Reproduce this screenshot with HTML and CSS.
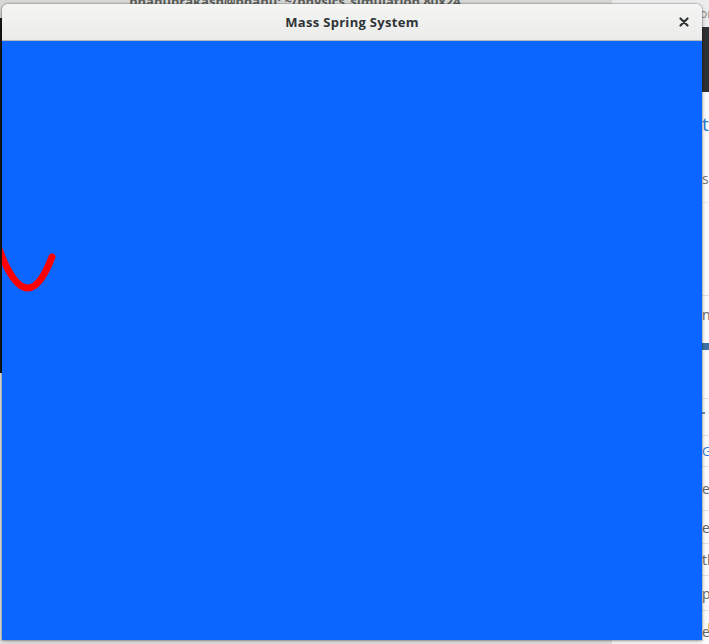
FILE: index.html
```html
<!DOCTYPE html>
<html>
<head>
<meta charset="utf-8">
<title>Mass Spring System</title>
<link rel="stylesheet" href="styles.css">
</head>
<body>
<div class="desktop">
  <div class="browser">
    <div class="tabbar"><span class="tabtext">or</span></div>
    <div class="toolbar"></div>
    <div class="page">
      <div class="row head"><span class="big">ti</span><span class="sub">s</span></div>
      <div class="row gap1"></div>
      <div class="row sec"><span class="txt">ne</span><div class="bar"></div></div>
      <div class="row r-mark"><span class="mark"></span></div>
      <div class="row r1"><span class="link">G</span></div>
      <div class="row r2"><span class="txt">e</span></div>
      <div class="row r3"><span class="txt">e</span></div>
      <div class="row r4"><span class="txt">th</span></div>
      <div class="row r5"><span class="txt">p</span></div>
      <div class="row r6"><span class="txt">e</span><span class="yel"></span></div>
    </div>
  </div>

  <div class="terminal">
    <div class="term-title">bhanuprakash@bhanu: ~/physics_simulation 80x24</div>
    <div class="term-body"></div>
  </div>

  <div class="window">
    <div class="headerbar">
      <span class="title">Mass Spring System</span>
      <span class="close">
        <svg width="10" height="10" viewBox="0 0 10 10"><path d="M1.5 1.5 L8.5 8.5 M8.5 1.5 L1.5 8.5" stroke="#2e3436" stroke-width="2.2" stroke-linecap="round"/></svg>
      </span>
    </div>
    <div class="canvas">
      <svg class="spring" width="700" height="599" viewBox="0 0 700 599">
        <path d="M-6 199.5 Q10 247 26 247 Q38 247 50 216" fill="none" stroke="#ff0000" stroke-width="7" stroke-linecap="round" stroke-linejoin="round"/>
      </svg>
    </div>
  </div>
</div>
</body>
</html>
```

FILE: styles.css
```css
html, body {
  margin: 0;
  padding: 0;
}
body {
  width: 709px;
  height: 644px;
  overflow: hidden;
  background: #e6e6e6;
  font-family: "Open Sans", "DejaVu Sans", sans-serif;
}
.desktop {
  position: relative;
  width: 709px;
  height: 644px;
  overflow: hidden;
  background: #e4e4e4;
}

/* background browser window */
.browser {
  position: absolute;
  left: 612px;
  top: 0;
  width: 200px;
  height: 660px;
  display: flex;
  flex-direction: column;
  background: #fcfcfc;
}
.tabbar {
  height: 27px;
  background: #ececec;
  display: flex;
  align-items: center;
  padding-left: 88px;
}
.tabtext {
  font-size: 12px;
  color: #8a8a8a;
}
.toolbar {
  height: 65px;
  background: #2e3133;
}
.page {
  display: flex;
  flex-direction: column;
  padding-left: 90px;
}
.row {
  border-bottom: 1px solid #e2e2e2;
  box-sizing: border-box;
  position: relative;
  display: flex;
  flex-direction: column;
  justify-content: center;
  color: #666;
  font-size: 13px;
}
.head {
  height: 111px;
  justify-content: flex-start;
  border-bottom-color: #ececec;
}
.big {
  margin-top: 20px;
  font-size: 19px;
  color: #2b7bd8;
  line-height: 24px;
}
.sub {
  margin-top: 33px;
  font-size: 14px;
  color: #777;
}
.gap1 { height: 93px; }
.sec {
  height: 103px;
  justify-content: flex-start;
}
.sec .txt {
  margin-top: 9px;
  font-size: 14px;
}
.bar {
  margin-top: 19px;
  margin-left: -2px;
  height: 7px;
  width: 20px;
  background: #3d74a8;
}
.r-mark { height: 37px; }
.mark {
  display: block;
  width: 3px;
  height: 2px;
  background: #6a8fc0;
  margin-top: -8px;
}
.r1 { height: 31px; }
.link { color: #2b7bd8; font-size: 13px; }
.r2 { height: 44px; }
.r3 { height: 33px; }
.r4 { height: 32px; }
.r5 { height: 35px; }
.r6 { height: 40px; border-bottom: none; }
.yel {
  position: absolute;
  left: 6px;
  top: 12px;
  width: 3px;
  height: 8px;
  background: #e8c86a;
}
.txt { font-size: 14px; color: #666; }

/* background terminal */
.terminal {
  position: absolute;
  left: -40px;
  top: -18px;
  width: 652px;
  height: 391px;
  display: flex;
  flex-direction: column;
}
.term-title {
  height: 36px;
  background: #d8d8d6;
  color: #5c5f5b;
  font-weight: 700;
  font-size: 13px;
  display: flex;
  align-items: center;
  justify-content: center;
  padding-left: 18px;
  padding-top: 2px;
  box-sizing: border-box;
}
.term-body {
  flex: 1;
  background: #161616;
}

/* main window */
.window {
  position: absolute;
  left: 2px;
  top: 4px;
  width: 700px;
  height: 636px;
  display: flex;
  flex-direction: column;
  border-radius: 6px 6px 0 0;
  box-shadow: 0 1px 4px rgba(0, 0, 0, 0.35), 0 0 0 1px rgba(0, 0, 0, 0.12);
  overflow: hidden;
}
.headerbar {
  height: 36px;
  flex: none;
  background: linear-gradient(#f5f5f4, #ebebea);
  border-bottom: 1px solid #b9b9b6;
  display: flex;
  align-items: center;
  justify-content: center;
  position: relative;
}
.title {
  font-weight: 700;
  font-size: 13px;
  color: #2e3436;
  letter-spacing: 0.3px;
}
.close {
  position: absolute;
  right: 13px;
  top: 13px;
  width: 10px;
  height: 10px;
  display: flex;
}
.canvas {
  flex: 1;
  background: #0a66ff;
  position: relative;
}
.spring {
  display: block;
}
```
